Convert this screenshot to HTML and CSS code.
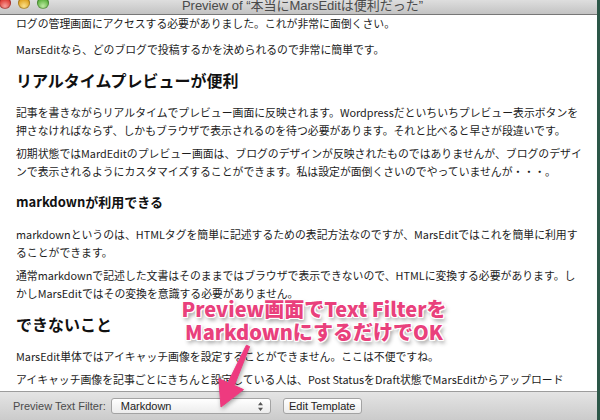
FILE: index.html
```html
<!DOCTYPE html>
<html lang="ja">
<head>
<meta charset="utf-8">
<title>Preview</title>
<link rel="stylesheet" href="styles.css">
</head>
<body>
<div class="window">
  <div class="titlebar">
    <div class="lights">
      <span class="light red"></span>
      <span class="light yellow"></span>
      <span class="light green"></span>
    </div>
    <div class="title">Preview of “本当にMarsEditは便利だった”</div>
  </div>
  <div class="viewport">
    <article class="doc">
      <p class="lead">ログの管理画面にアクセスする必要がありました。これが非常に面倒くさい。</p>
      <p>MarsEditなら、どのブログで投稿するかを決められるので非常に簡単です。</p>
      <h2>リアルタイムプレビューが便利</h2>
      <p>記事を書きながらリアルタイムでプレビュー画面に反映されます。Wordpressだといちいちプレビュー表示ボタンを<br>押さなければならず、しかもブラウザで表示されるのを待つ必要があります。それと比べると早さが段違いです。</p>
      <p>初期状態ではMardEditのプレビュー画面は、ブログのデザインが反映されたものではありませんが、ブログのデザイ<br>ンで表示されるようにカスタマイズすることができます。私は設定が面倒くさいのでやっていませんが・・・。</p>
      <h3>markdownが利用できる</h3>
      <p>markdownというのは、HTMLタグを簡単に記述するための表記方法なのですが、MarsEditではこれを簡単に利用す<br>ることができます。</p>
      <p>通常markdownで記述した文書はそのままではブラウザで表示できないので、HTMLに変換する必要があります。し<br>かしMarsEditではその変換を意識する必要がありません。</p>
      <h2>できないこと</h2>
      <p>MarsEdit単体ではアイキャッチ画像を設定することができません。ここは不便ですね。</p>
      <p>アイキャッチ画像を記事ごとにきちんと設定している人は、Post StatusをDraft状態でMarsEditからアップロード</p>
    </article>
  </div>
  <div class="toolbar">
    <span class="label">Preview Text Filter:</span>
    <div class="select">
      <span>Markdown</span>
      <svg class="updown" width="5" height="9" viewBox="0 0 5 9"><path d="M2.5 0 L5 3.2 L0 3.2 Z M2.5 9 L5 5.8 L0 5.8 Z" fill="#555"/></svg>
    </div>
    <div class="button">Edit Template</div>
  </div>
  <div class="callout">Preview画面でText Filterを<br>MarkdownにするだけでOK</div>
  <svg class="arrow" width="597" height="420" viewBox="0 0 597 420">
    <polygon points="249.6,346.6 234.3,385.5 243.5,389.6 221,407 218.8,378.6 227.9,382.7 246.4,345.2" fill="#ee3a7f" stroke="#ee3a7f" stroke-width="1" stroke-linejoin="round"/>
  </svg>
</div>
</body>
</html>
```
FILE: styles.css
```css
html, body {
  margin: 0;
  padding: 0;
}
body {
  width: 600px;
  height: 420px;
  overflow: hidden;
  background: #2c5748;
  font-family: "Noto Sans CJK JP", "Noto Sans", sans-serif;
}
.window {
  position: relative;
  width: 597px;
  height: 420px;
  display: flex;
  flex-direction: column;
  background: #ffffff;
  overflow: hidden;
}
.titlebar {
  position: relative;
  height: 14px;
  flex: none;
  border-bottom: 1px solid #777777;
  background: linear-gradient(#dedede, #c3c3c3);
  display: flex;
  justify-content: center;
}
.lights {
  position: absolute;
  left: -1px;
  top: -3px;
  display: flex;
  gap: 7px;
}
.light {
  width: 12px;
  height: 12px;
  border-radius: 50%;
  box-shadow: inset 0 0 0 1px rgba(0,0,0,0.25);
}
.red { background: radial-gradient(circle at 50% 75%, #f7a09b 0, #e1463f 55%, #b5251f 100%); }
.yellow { background: radial-gradient(circle at 50% 75%, #fbe08a 0, #e3a929 55%, #b3790f 100%); }
.green { background: radial-gradient(circle at 50% 75%, #bfeaa4 0, #66b848 55%, #3a8a25 100%); }
.title {
  font-family: "Lucida Grande", "Liberation Sans", "Noto Sans CJK JP", sans-serif;
  font-size: 13px;
  line-height: 12px;
  color: #4a4a4a;
  padding-left: 8px;
}
.viewport {
  flex: 1;
  overflow: hidden;
  padding: 0 16px;
}
.doc {
  margin-top: -1px;
  color: #1c1c1c;
}
.doc p {
  margin: 0 0 5px;
  font-size: 10.85px;
  line-height: 18px;
  white-space: nowrap;
}
.doc p.lead {
  margin-bottom: 8px;
}
.doc h2 {
  margin: 11px 0 12px;
  font-size: 16px;
  line-height: 22px;
  font-weight: 700;
  color: #111;
}
.doc h3 {
  margin: 13px 0 14px;
  font-size: 13px;
  line-height: 18px;
  font-weight: 700;
  color: #111;
}
.toolbar {
  flex: none;
  height: 28px;
  border-top: 1px solid #9c9c9c;
  background: linear-gradient(#e4e4e4, #cbcbcb);
  display: flex;
  align-items: center;
  padding-left: 13px;
  font-family: "Lucida Grande", "Liberation Sans", sans-serif;
  font-size: 11px;
}
.label {
  color: #4b4b4b;
}
.select {
  margin-left: 5px;
  width: 160px;
  height: 16px;
  box-sizing: border-box;
  border: 1px solid #a3a3a3;
  border-radius: 3px;
  background: linear-gradient(#ffffff, #ececec);
  display: flex;
  align-items: center;
  justify-content: space-between;
  padding: 0 7px 0 9px;
  color: #222;
}
.updown {
  display: block;
}
.button {
  margin-left: 12px;
  width: 79px;
  height: 16px;
  box-sizing: border-box;
  border: 1px solid #a3a3a3;
  border-radius: 3px;
  background: linear-gradient(#ffffff, #ececec);
  display: flex;
  align-items: center;
  justify-content: center;
  color: #222;
}
.callout {
  position: absolute;
  left: 178px;
  top: 297px;
  width: 272px;
  text-align: center;
  font-family: "Noto Sans CJK JP", sans-serif;
  font-weight: 900;
  font-size: 20px;
  line-height: 23px;
  color: #e9407c;
  white-space: nowrap;
  text-shadow: 1px 0 0 #fff, -1px 0 0 #fff, 0 1px 0 #fff, 0 -1px 0 #fff, 1px 1px 0 #fff, -1px -1px 0 #fff, 1px -1px 0 #fff, -1px 1px 0 #fff, 0 0 3px #fff, 2px 3px 4px rgba(0,0,0,0.45);
}
.arrow {
  position: absolute;
  left: 0;
  top: 0;
  pointer-events: none;
  filter: drop-shadow(1px 2px 2px rgba(0,0,0,0.35));
}
```
